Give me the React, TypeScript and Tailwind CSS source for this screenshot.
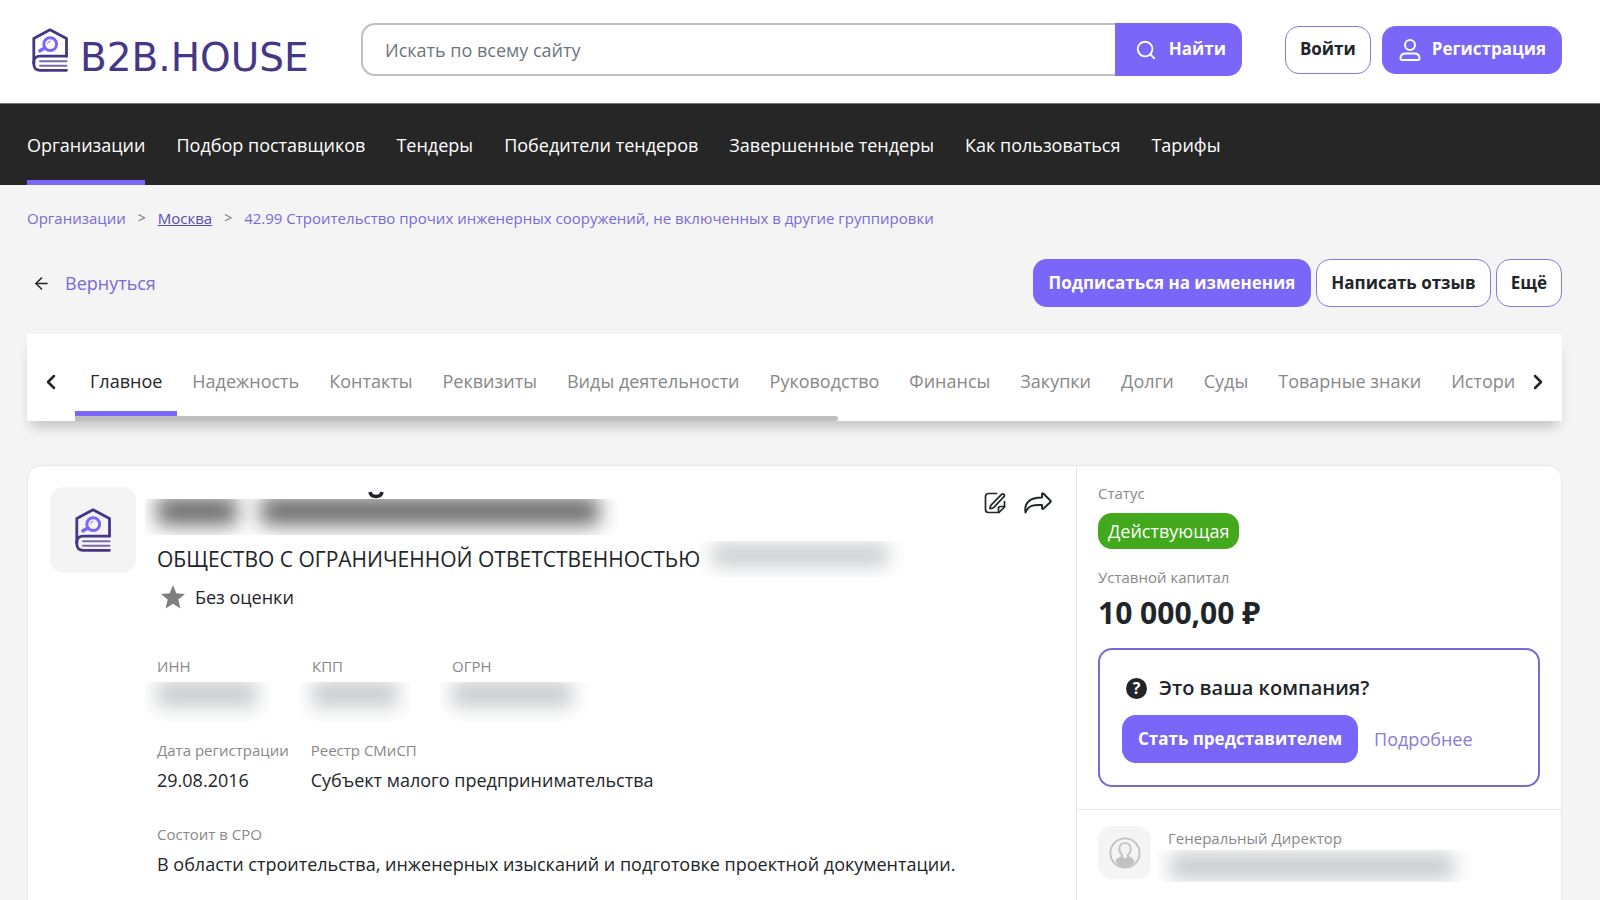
import React, { useState } from 'react';
import { ArrowLeft, ChevronLeft, ChevronRight, Search } from 'lucide-react';

const NAV_ITEMS = [
  'Организации',
  'Подбор поставщиков',
  'Тендеры',
  'Победители тендеров',
  'Завершенные тендеры',
  'Как пользоваться',
  'Тарифы'
];

const TABS = [
  'Главное',
  'Надежность',
  'Контакты',
  'Реквизиты',
  'Виды деятельности',
  'Руководство',
  'Финансы',
  'Закупки',
  'Долги',
  'Суды',
  'Товарные знаки',
  'История'
];

const LogoMark: React.FC<{ className?: string }> = ({ className }) => (
  <svg viewBox="0 0 36 44" className={className} fill="none" strokeLinejoin="round" strokeLinecap="round" aria-hidden="true">
    <path d="M8 33.200h26.500M8 37.800h26.500" stroke="#7b6aa9" strokeWidth="2" />
    <path d="M34.500 28V10.500L18 1.800 1.800 10.500V35" stroke="#453687" strokeWidth="2.800" />
    <path d="M34.500 28.200H8C4 28.200 1.800 30.500 1.800 34v2c0 4 2.500 6.300 6.200 6.300h26.500" stroke="#453687" strokeWidth="2.800" />
    <circle cx="18.200" cy="16.200" r="6.400" stroke="#7a66f8" strokeWidth="3" />
    <path d="M12.800 20L8 22.800" stroke="#7a66f8" strokeWidth="3.600" />
    <path d="M15.500 15.500c.4-1.300 1.400-2 2.700-2.200" stroke="#a99cfb" strokeWidth="1.200" />
  </svg>
);

const UserIcon = () => (
  <svg viewBox="0 0 24 24" className="size-6" fill="none" stroke="currentColor" strokeWidth="2" aria-hidden="true">
    <circle cx="12" cy="7" r="5" />
    <path d="M7.500 15.500h9c3 0 4.800 2 5 4.500.1 1.200-.5 2-1.700 2H4.200C3 22 2.400 21.200 2.500 20c.2-2.500 2-4.500 5-4.500z" />
  </svg>
);

const EditIcon = () => (
  <svg viewBox="0 0 22 22" className="size-[22px]" fill="none" stroke="currentColor" strokeWidth="1.700" strokeLinecap="round" strokeLinejoin="round" aria-hidden="true">
    <path d="M12.500 1.500H4.500a3 3 0 0 0-3 3v13a3 3 0 0 0 3 3h10.500l5.500-5.500V9.500" />
    <path d="M14.500 20.300V16.500a2 2 0 0 1 2-2h4" />
    <path d="M17.600 2.300a1.700 1.700 0 0 1 2.400 2.400L9.800 15.400c-1 .9-2.300 1.200-3.800 1.300.1-1.500.4-2.800 1.300-3.800z" />
  </svg>
);

const ShareIcon = () => (
  <svg viewBox="0 0 28 22" className="h-[22px] w-7" fill="none" stroke="currentColor" strokeWidth="1.900" strokeLinecap="round" strokeLinejoin="round" aria-hidden="true">
    <path d="M18 2.200c0-.9.700-1.200 1.300-.7l7 7c.6.600.6 1.200 0 1.800l-7 6.500c-.6.500-1.300.2-1.300-.7V13C9.500 12.600 4 13.500 1.500 20.500 0 11 5.500 5.500 18 5.500z" />
  </svg>
);

const AvatarIcon = () => (
  <svg viewBox="0 0 34 34" className="size-8" fill="none" stroke="#c2c2c2" strokeWidth="2" aria-hidden="true">
    <circle cx="17" cy="17" r="15.500" />
    <path d="M17 6.500c-4 0-6 2.800-6 6.500 0 2.500 1.200 4.800 3 6.200v2.300M17 6.500c4 0 6 2.800 6 6.500 0 2.500-1.200 4.800-3 6.200v2.300" />
    <path d="M14 20.500c-3.500 1-6.500 2-7 6 2.500 3.500 6 5.500 10 5.500s7.500-2 10-5.500c-.5-4-3.500-5-7-6-1 2.500-5 2.500-6 0z" fill="#c2c2c2" stroke="none" />
  </svg>
);

const primaryButton = 'h-12 rounded-[14px] bg-[#7a66f8] px-4 text-[17px] font-bold text-white whitespace-nowrap';
const outlineButton = 'h-12 rounded-[14px] border border-[#8a7ad8] bg-white px-3.5 text-[17px] font-bold text-[#212529] whitespace-nowrap';

// Hidden values are only shown as a smeared bar
const Redacted: React.FC<{ className: string; parts: string[] }> = ({ className, parts }) => (
  <div className={`flex items-center overflow-hidden ${className}`} aria-hidden="true">
    {parts.map((part, i) => (
      <span key={i} className={`shrink-0 ${part}`} />
    ))}
  </div>
);

const Field: React.FC<{ label: string; value?: string; children?: React.ReactNode }> = ({ label, value, children }) => (
  <div>
    <dt className="text-[15px] leading-6 text-[#888888]">{label}</dt>
    <dd className="mt-1 leading-7">{value ?? children}</dd>
  </div>
);

const App: React.FC = () => {
  const [tab, setTab] = useState(TABS[0]);
  const [query, setQuery] = useState('');

  return (
    <div className="flex min-h-screen flex-col overflow-x-hidden bg-[#f4f4f4] font-['Open_Sans','Noto_Sans',sans-serif] text-lg text-[#212529]">
      <header className="flex h-[103px] items-center bg-white pr-[38px] pb-1 pl-8">
        <a href="#" className="flex w-[281px] items-end gap-3 text-[#453687]">
          <LogoMark className="h-11 w-9 shrink-0" />
          <span className="font-['DejaVu_Sans',sans-serif] text-[39px] leading-7">B2B.HOUSE</span>
        </a>
        <form className="ml-12 flex h-[53px] flex-1" onSubmit={(e) => e.preventDefault()}>
          <input
            type="search"
            aria-label="Искать по всему сайту"
            placeholder="Искать по всему сайту"
            value={query}
            onChange={(e) => setQuery(e.target.value)}
            className="min-w-0 flex-1 rounded-l-[14px] border-2 border-r-0 border-[#bfbfbf] px-[22px] placeholder:text-[#6c757d]"
          />
          <button type="submit" className="flex items-center gap-3 rounded-r-[14px] bg-[#7a66f8] pr-4 pl-5 text-[17px] font-bold text-white">
            <Search className="size-[22px]" />
            Найти
          </button>
        </form>
        <div className="ml-[43px] flex gap-[11px]">
          <button className={outlineButton}>Войти</button>
          <button className={`${primaryButton} flex items-center gap-2.5`}>
            <UserIcon />
            Регистрация
          </button>
        </div>
      </header>

      <nav className="flex h-[82px] gap-[31px] border-t border-[#777777] bg-[#262626] px-[27px] text-white">
        {NAV_ITEMS.map((item, i) => (
          <a
            key={item}
            href="#"
            className={`flex items-center border-b-[5px] pt-[5px] whitespace-nowrap ${i === 0 ? 'border-[#7a66f8]' : 'border-transparent'}`}
          >
            {item}
          </a>
        ))}
      </nav>

      <main className="flex flex-1 flex-col pr-[38px] pl-[27px]">
        <div className="mt-[19px] flex gap-3 text-[15px] leading-7 text-[#7a6ad8]">
          <a href="#">Организации</a>
          <span className="text-sm leading-7 text-[#777777]">&gt;</span>
          <a href="#" className="text-[#5a4ab0] underline">Москва</a>
          <span className="text-sm leading-7 text-[#777777]">&gt;</span>
          <a href="#">42.99 Строительство прочих инженерных сооружений, не включенных в другие группировки</a>
        </div>

        <div className="mt-[27px] flex items-center justify-between">
          <a href="#" className="flex items-center gap-3.5 pl-[5px] text-[#7a6ad8]">
            <ArrowLeft className="size-[19px] text-[#212529]" />
            Вернуться
          </a>
          <div className="flex gap-[5px]">
            <button className={primaryButton}>Подписаться на изменения</button>
            <button className={outlineButton}>Написать отзыв</button>
            <button className={outlineButton}>Ещё</button>
          </div>
        </div>

        <div className="mt-[27px] flex h-[87px] bg-white shadow-[0_10px_12px_-4px_rgba(0,0,0,0.2)]">
          <button aria-label="Назад" className="flex w-12 shrink-0 items-center justify-center pt-2">
            <ChevronLeft className="size-6" strokeWidth={2.5} />
          </button>
          <div className="min-w-0 flex-1 overflow-hidden">
            <div role="tablist" className="flex h-[82px]">
              {TABS.map((item) => (
                <button
                  key={item}
                  role="tab"
                  aria-selected={item === tab}
                  onClick={() => setTab(item)}
                  className={`border-b-[5px] px-[15px] pt-[17px] whitespace-nowrap ${item === tab ? 'border-[#7a66f8] text-[#212529]' : 'border-transparent text-[#888888]'}`}
                >
                  {item}
                </button>
              ))}
            </div>
            <div className="h-[5px] w-[53%] rounded-r-sm bg-[#bfbfbf]" />
          </div>
          <button aria-label="Вперёд" className="flex w-12 shrink-0 items-center justify-center pt-2">
            <ChevronRight className="size-6" strokeWidth={2.5} />
          </button>
        </div>

        <section className="mt-11 flex flex-1 rounded-t-[14px] border border-b-0 border-[#e8e8e8] bg-white">
          <div className="flex min-w-0 flex-1 items-start pt-[21px] pl-[22px]">
            <div className="flex size-[86px] shrink-0 items-center justify-center rounded-[14px] bg-[#f4f4f4]">
              <LogoMark className="h-11 w-9" />
            </div>
            <div className="min-w-0 flex-1 pl-[21px]">
              <div className="flex justify-between pr-6">
                <h1 className="-ml-3 pt-1">
                  <svg viewBox="0 0 16 8" className="ml-[223px] h-2 w-4" fill="none" stroke="#212529" strokeWidth="3.500" aria-hidden="true">
                    <path d="M2 1c1 6 11 6 12 0" />
                  </svg>
                  <Redacted
                    className="h-9 w-[473px] gap-6 pb-3 pl-3"
                    parts={['h-7 w-20 bg-[#444444]/80 blur-[10px]', 'h-7 w-[338px] bg-[#444444]/80 blur-[10px]']}
                  />
                </h1>
                <div className="flex gap-[18px] pt-[3px]">
                  <button aria-label="Редактировать" className="h-[26px]"><EditIcon /></button>
                  <button aria-label="Поделиться" className="h-[26px]"><ShareIcon /></button>
                </div>
              </div>
              <div className="flex h-12 items-center text-[21px]">
                <h2 className="whitespace-nowrap">ОБЩЕСТВО С ОГРАНИЧЕННОЙ ОТВЕТСТВЕННОСТЬЮ</h2>
                <Redacted className="h-9 w-[205px] pb-2 pl-3" parts={['h-5 w-44 bg-[#c4c6c8] blur-[10px]']} />
              </div>
              <div className="flex items-center gap-2.5 pl-1">
                <svg viewBox="0 0 24 24" className="size-6" fill="#7f7f7f" aria-hidden="true">
                  <path d="M12 0l3.300 8.200 8.700.7-6.700 5.700L19.400 23.500 12 18.700 4.600 23.500l2.100-8.900L0 8.900l8.700-.7z" />
                </svg>
                Без оценки
              </div>

              <dl className="mt-[43px] flex gap-[42px]">
                <Field label="ИНН"><Redacted className="-ml-3 h-10 w-[125px] pb-4 pl-3" parts={['h-6 w-[100px] bg-[#c4c6c8] blur-[10px]']} /></Field>
                <Field label="КПП"><Redacted className="-ml-3 h-10 w-[110px] pb-4 pl-3" parts={['h-6 w-[86px] bg-[#c4c6c8] blur-[10px]']} /></Field>
                <Field label="ОГРН"><Redacted className="-ml-3 h-10 w-[150px] pb-4 pl-3" parts={['h-6 w-[120px] bg-[#c4c6c8] blur-[10px]']} /></Field>
              </dl>
              <dl className="mt-4 flex gap-[22px]">
                <Field label="Дата регистрации" value="29.08.2016" />
                <Field label="Реестр СМиСП" value="Субъект малого предпринимательства" />
              </dl>
              <dl className="mt-7">
                <Field label="Состоит в СРО" value="В области строительства, инженерных изысканий и подготовке проектной документации." />
              </dl>
            </div>
          </div>

          <aside className="w-[485px] shrink-0 border-l border-[#e8e8e8]">
            <div className="px-[21px] pt-[15px] pb-[22px]">
              <div className="text-[15px] leading-6 text-[#888888]">Статус</div>
              <span className="mt-2 inline-flex h-9 items-center rounded-[14px] bg-[#42a91c] px-2.5 text-white">Действующая</span>
              <div className="mt-4 text-[15px] leading-6 text-[#888888]">Уставной капитал</div>
              <div className="mt-1 text-3xl leading-10 font-bold">10 000,00 ₽</div>
              <div className="mt-[15px] rounded-[14px] border-2 border-[#7a6ad8] px-[22px] pt-6 pb-[22px]">
                <h3 className="flex items-center gap-3 pl-1 text-xl leading-7 font-semibold">
                  <span className="flex size-[21px] items-center justify-center rounded-full bg-[#212529] text-base font-bold text-white">?</span>
                  Это ваша компания?
                </h3>
                <div className="mt-[13px] flex items-center gap-4">
                  <button className={primaryButton}>Стать представителем</button>
                  <a href="#" className="text-[#8a7ad8]">Подробнее</a>
                </div>
              </div>
            </div>
            <div className="flex gap-[17px] border-t border-[#e8e8e8] px-[21px] pt-4">
              <div className="flex size-[53px] shrink-0 items-center justify-center rounded-[14px] bg-[#f4f4f4]">
                <AvatarIcon />
              </div>
              <div>
                <div className="text-[15px] leading-6 text-[#888888]">Генеральный Директор</div>
                <Redacted className="-ml-2.5 h-8 w-[314px] pl-3" parts={['h-6 w-[284px] bg-[#c4c6c8] blur-[10px]']} />
              </div>
            </div>
          </aside>
        </section>
      </main>
    </div>
  );
};

export default App;
